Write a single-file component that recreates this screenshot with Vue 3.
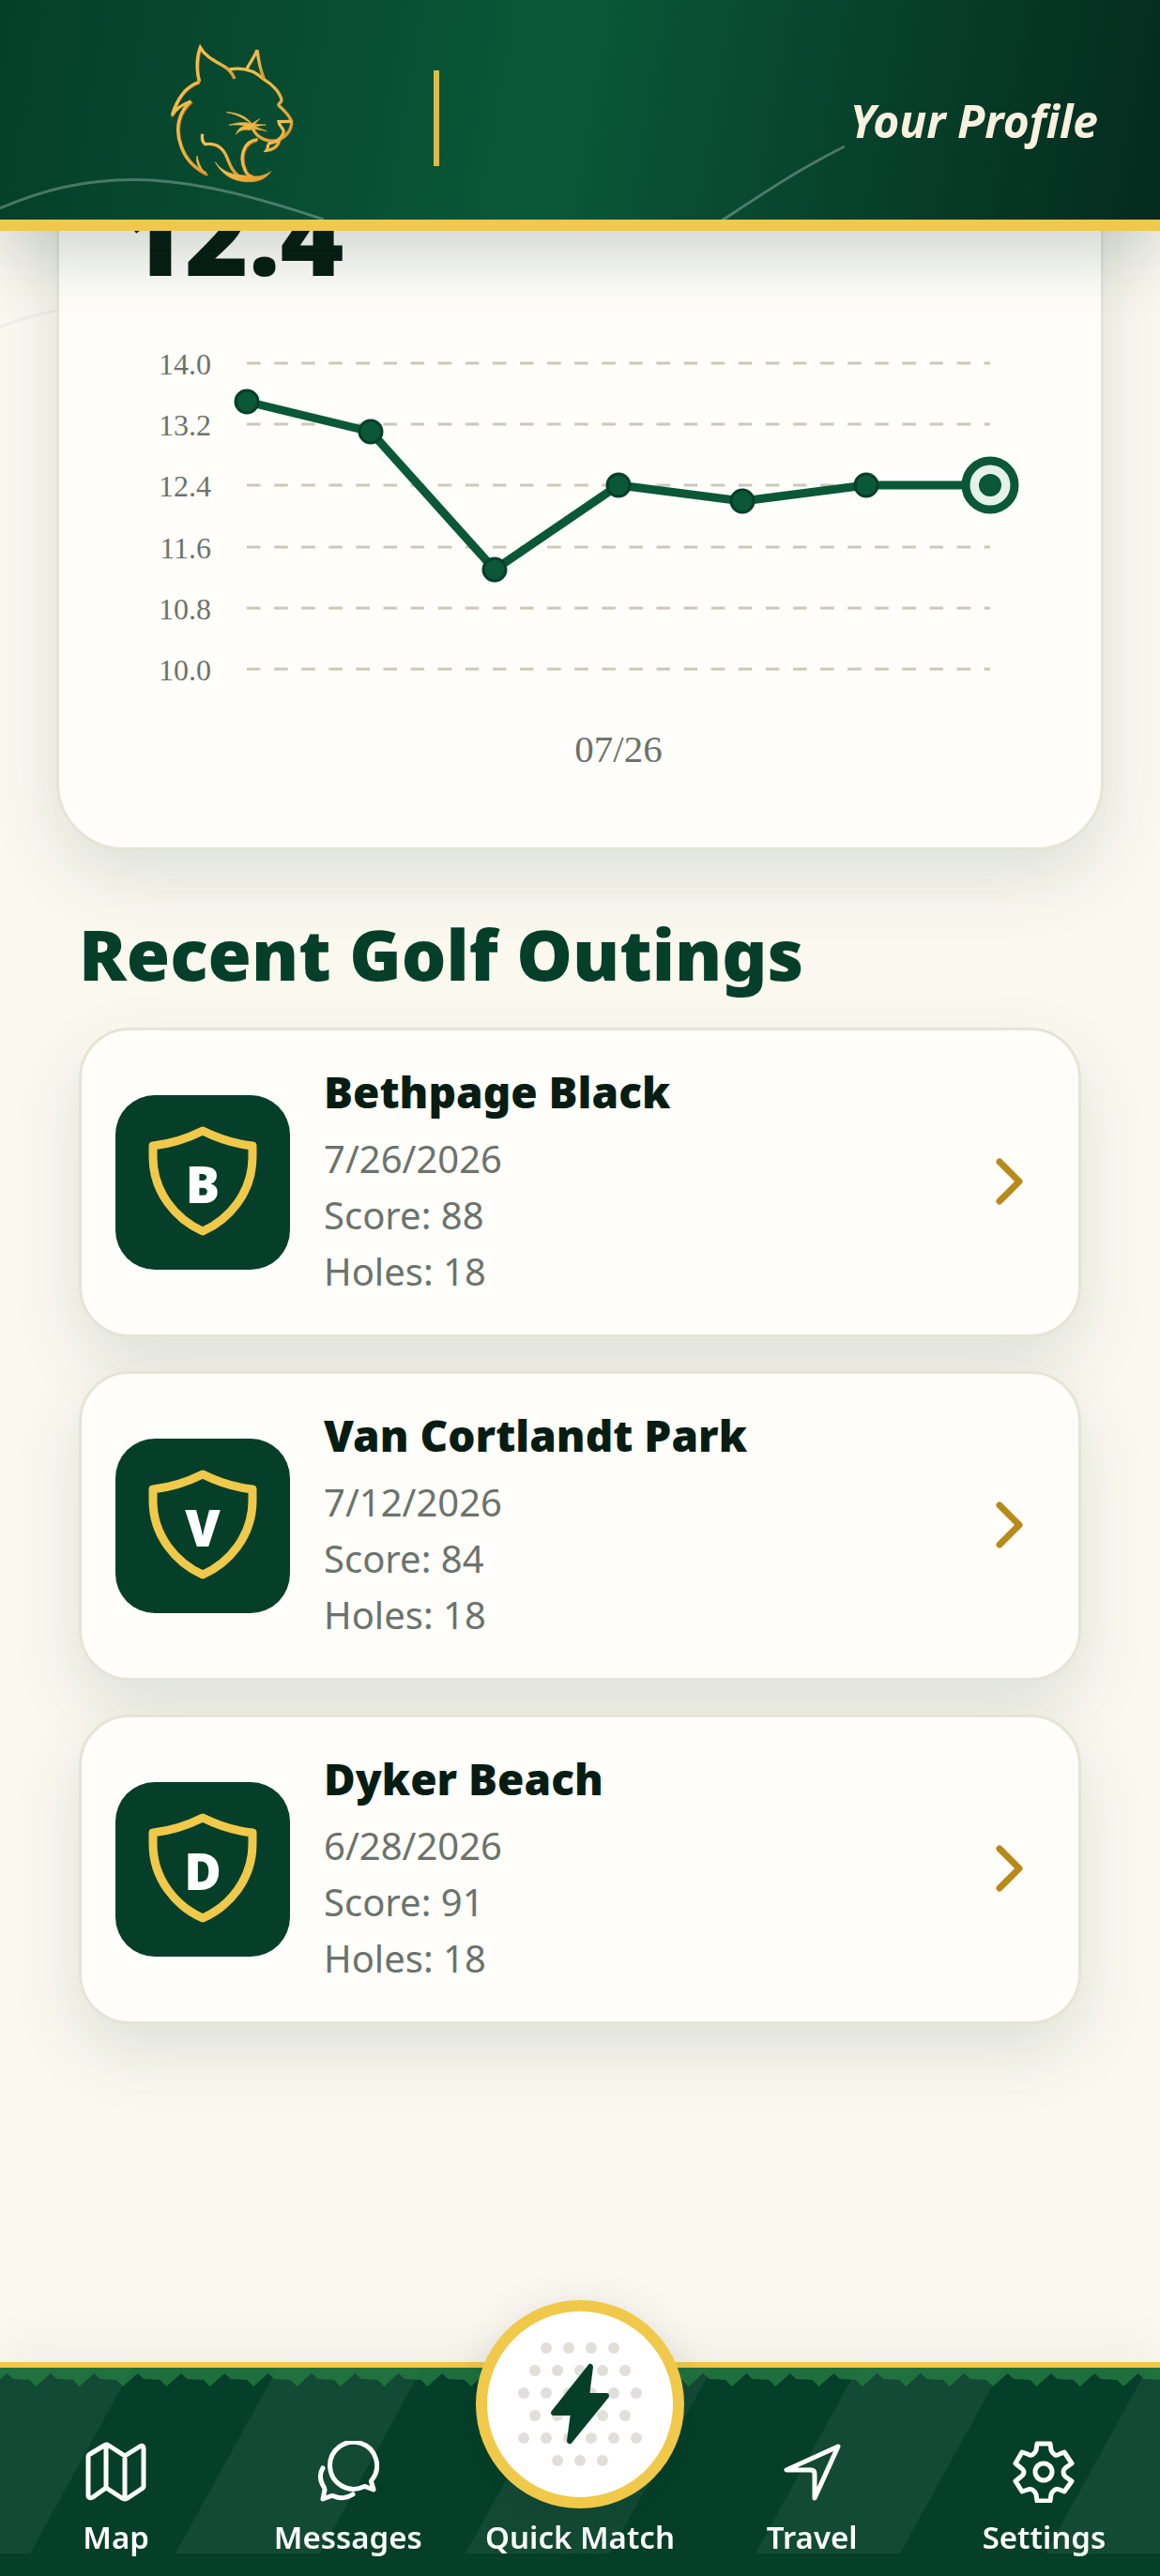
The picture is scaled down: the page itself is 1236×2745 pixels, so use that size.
<script setup>
import { computed } from 'vue'

const history = [13.5, 13.1, 11.3, 12.4, 12.2, 12.4, 12.4]
const ticks = [14.0, 13.2, 12.4, 11.6, 10.8, 10.0]

const yFor = (value) => Math.round(57 + (14 - value) * 81.5)
const points = history.map((value, i) => ({ x: 134 + i * 132, y: yFor(value) }))
const linePoints = computed(() => points.map((p) => `${p.x},${p.y}`).join(' '))
const lastPoint = points[points.length - 1]

const outings = [
  { course: 'Bethpage Black', date: '7/26/2026', score: 88, holes: 18 },
  { course: 'Van Cortlandt Park', date: '7/12/2026', score: 84, holes: 18 },
  { course: 'Dyker Beach', date: '6/28/2026', score: 91, holes: 18 },
]

const blade = 1236 / (26 + 2 / 3)
const grassPath = (() => {
  let d = 'M-10 0'
  for (let i = -1; i < 27; i++) {
    const x = 38.3 + i * blade
    d += `L${x} 20L${x + 15.7} 6L${x + 22} 12L${x + 39.5} 13`
  }
  return d + 'V0Z'
})()
const stripes = [0, 1, 2, 3, 4].map((i) => {
  const x = -122 + i * 309
  return `${x},198 ${x + 154},198 ${x + 263},0 ${x + 109},0`
})

const dots = [
  { y: -60, xs: [-36, -12, 12, 36] },
  { y: -36, xs: [-48, -24, 0, 24, 48] },
  { y: -12, xs: [-60, -36, -12, 12, 36, 60] },
  { y: 12, xs: [-48, -24, 0, 24, 48] },
  { y: 36, xs: [-60, -36, -12, 12, 36, 60] },
  { y: 60, xs: [-24, 0, 24] },
]
</script>

<template>
  <div class="page">
    <header class="top">
      <svg class="wave" viewBox="0 0 1236 234" preserveAspectRatio="none" aria-hidden="true">
        <path d="M0 222C110 173 205 187 345 234M769 235C815 205 850 181 900 156" />
      </svg>
      <svg class="logo" viewBox="0 18 510 540" role="img" aria-label="Wildcat logo">
        <defs>
          <linearGradient id="gold" x1="0" y1="0" x2="1" y2="1">
            <stop offset="0" stop-color="#f3bf50" />
            <stop offset="0.5" stop-color="#f0b644" />
            <stop offset="1" stop-color="#dc962f" />
          </linearGradient>
        </defs>
        <g class="logo-shade">
          <path d="M162 60C152 88 148 140 157 174M70 284C82 240 108 190 157 174M134 236C94 268 80 320 100 377C114 422 146 450 182 470M340 360C297 368 288 416 306 457" />
        </g>
        <g class="logo-lines">
          <path d="M158 170C146 135 149 90 160 62C180 98 225 112 250 132C260 142 266 150 270 162" />
          <path d="M254 132C298 123 336 138 364 164C394 182 416 208 420 230C420 240 406 240 412 248C428 262 446 280 452 298C453 324 436 346 412 357C378 367 344 354 328 322" />
          <path d="M309 130C321 106 336 88 342 70C346 102 354 138 364 162" />
          <path d="M157 172C106 188 82 240 70 278C84 256 100 244 130 234C92 266 78 320 98 375C112 418 143 448 178 464" />
          <path d="M452 298L411 299C412 314 424 316 427 330C424 343 420 350 408 357" />
          <path d="M413 357C410 378 392 390 372 391C378 384 374 376 380 369L411 360" />
          <path d="M167 338C165 352 166 364 176 371C214 366 234 386 245 412C255 437 262 458 286 476" />
          <path d="M344 356C296 360 284 416 304 456C310 468 318 474 330 476" />
        </g>
        <g class="logo-fill">
          <path d="M208 428C242 474 288 468 320 473C350 476 368 470 386 458C366 486 340 493 305 491C260 488 228 465 208 428Z" />
          <path d="M150 408C146 428 150 448 186 471C166 456 156 438 150 408Z" />
          <path d="M244 269C286 270 318 286 336 322C320 300 288 276 244 269Z" />
          <path d="M252 310C280 300 306 300 324 306L350 290L334 307L370 309L334 314L373 329L330 322L316 326C300 322 286 326 274 340C280 322 292 314 306 312C288 308 270 308 252 310Z" />
        </g>
      </svg>
      <span class="divider"></span>
      <h1 class="title">Your Profile</h1>
    </header>

    <main class="content">
      <svg class="contour" viewBox="0 0 60 20" aria-hidden="true">
        <path d="M0 18C22 10 40 5 60 1" />
      </svg>

      <section class="handicap" aria-label="Handicap history">
        <p class="value">12.4</p>
        <svg class="chart" viewBox="0 0 978 495" role="img" aria-label="Handicap trend">
          <g v-for="tick in ticks" :key="tick">
            <line class="grid" x1="134" x2="926" :y1="yFor(tick)" :y2="yFor(tick)" />
            <text class="tick" x="96" :y="yFor(tick) + 12">{{ tick.toFixed(1) }}</text>
          </g>
          <polyline class="trend" :points="linePoints" />
          <circle v-for="p in points.slice(0, -1)" :key="p.x" class="dot" :cx="p.x" :cy="p.y" r="12" />
          <circle class="halo" :cx="lastPoint.x" :cy="lastPoint.y" r="26" />
          <circle class="core" :cx="lastPoint.x" :cy="lastPoint.y" r="12" />
          <text class="month" x="530" y="482">07/26</text>
        </svg>
      </section>

      <section>
        <h2 class="heading">Recent Golf Outings</h2>
        <ul class="outings">
          <li v-for="outing in outings" :key="outing.course">
            <a class="outing" href="#">
              <svg class="badge" viewBox="0 0 186 186" aria-hidden="true">
                <path d="M93 38Q119 51 146 54V66C146 103 122 132 93 145C64 132 40 103 40 66V54Q67 51 93 38Z" />
                <text x="93" y="115">{{ outing.course[0] }}</text>
              </svg>
              <span class="info">
                <strong class="course">{{ outing.course }}</strong>
                <span class="detail">{{ outing.date }}</span>
                <span class="detail">Score: {{ outing.score }}</span>
                <span class="detail">Holes: {{ outing.holes }}</span>
              </span>
              <svg class="chevron" viewBox="0 0 80 80" aria-hidden="true">
                <path d="M32 18L53 39L32 60" />
              </svg>
            </a>
          </li>
        </ul>
      </section>
    </main>

    <nav class="tabs" aria-label="Main">
      <svg class="turf" viewBox="0 0 1236 198" preserveAspectRatio="none" aria-hidden="true">
        <polygon v-for="s in stripes" :key="s" class="stripe" :points="s" />
        <path class="grass" :d="grassPath" />
      </svg>
      <a class="tab" href="#">
        <svg class="icon" viewBox="0 0 66 66" aria-hidden="true">
          <path d="M3 17Q3 15 5 14L20 5Q22 3 25 5L42 16L58 6Q62 4 62 8V48Q62 50 60 51L45 61Q42 63 39 61L22 50L8 60Q3 62 3 58ZM22 5V50M42 16V61" />
        </svg>
        <span>Map</span>
      </a>
      <a class="tab" href="#">
        <svg class="icon" viewBox="0 0 66 66" aria-hidden="true">
          <path d="M58 42Q57 43 58 45L60 52L52 49Q51 48 49 49A25 25 0 1 1 58 42ZM6 29C2 35 3 43 7 49Q8 51 8 52L6 62L14 59Q16 58 18 59C24 62 32 61 38 57" />
        </svg>
        <span>Messages</span>
      </a>
      <a class="tab" href="#">
        <span class="quick">
          <svg viewBox="-99 -99 198 198" aria-hidden="true">
            <g class="dimples">
              <template v-for="row in dots" :key="row.y">
                <circle v-for="x in row.xs" :key="x" :cx="x" :cy="row.y" r="6" />
              </template>
            </g>
            <path class="bolt" d="M11 -40L7 -9H28L-11 39L-7 9H-28Z" />
          </svg>
        </span>
        <span>Quick Match</span>
      </a>
      <a class="tab" href="#">
        <svg class="icon" viewBox="0 0 66 66" aria-hidden="true">
          <path d="M61 6L6 31H32Q36 31 36 35V61Z" />
        </svg>
        <span>Travel</span>
      </a>
      <a class="tab" href="#">
        <svg class="icon" viewBox="0 0 66 66" aria-hidden="true">
          <path d="M26 3H40L41 10Q42 13 45 15Q47 16 50 14L55 12L63 24L56 29Q54 31 54 33Q54 36 56 38L63 43L55 54L50 52Q47 51 45 52Q42 54 41 57L40 64H26L25 57Q24 54 21 52Q18 51 16 52L10 54L3 43L9 38Q12 36 12 33Q12 31 9 29L3 24L10 12L16 14Q18 16 21 15Q24 13 25 10Z" />
          <circle cx="33" cy="33" r="9" />
        </svg>
        <span>Settings</span>
      </a>
    </nav>
  </div>
</template>

<style>
body {
  background: #fbf8f0;
}
</style>

<style scoped>
.page {
  min-height: 100vh;
  color: #071d13;
  font-family: "Noto Sans", "Open Sans", sans-serif;
}

.top {
  position: fixed;
  z-index: 2;
  top: 0;
  left: 0;
  right: 0;
  height: 246px;
  box-sizing: border-box;
  display: flex;
  align-items: center;
  gap: 132px;
  padding: 18px 66px 0 160px;
  border-bottom: 12px solid #f0c94a;
  background: linear-gradient(100deg, #053f29, #0a5838 48%, #042b1e) padding-box;
  box-shadow: 0 24px 72px rgba(5, 46, 31, 0.2);
}

.wave {
  position: absolute;
  inset: 0;
  width: 100%;
  height: 234px;
}

.wave path {
  fill: none;
  stroke: #fff;
  stroke-opacity: 0.28;
  stroke-width: 3;
}

.logo {
  width: 170px;
  height: 180px;
  flex: none;
  position: relative;
}

.logo-lines path {
  fill: none;
  stroke: url(#gold);
  stroke-width: 10;
  stroke-linejoin: miter;
}

.logo-shade path {
  fill: none;
  stroke: #a8641c;
  stroke-width: 11;
}

.logo-fill {
  fill: url(#gold);
  stroke: url(#gold);
  stroke-width: 2;
}

.divider {
  width: 6px;
  height: 102px;
  background: #dabc48;
}

.title {
  margin: 6px 0 0 auto;
  color: #f9f1df;
  font-size: 48px;
  line-height: 60px;
  font-style: italic;
  font-weight: 700;
}

.content {
  position: relative;
  padding: 108px 60px 588px;
}

.contour {
  position: absolute;
  top: 330px;
  left: 0;
  width: 60px;
  height: 20px;
}

.contour path {
  fill: none;
  stroke: #053f29;
  stroke-opacity: 0.04;
  stroke-width: 3;
}

.handicap {
  position: relative;
  padding: 78px 66px;
  border: 3px solid #e4e4d8;
  border-radius: 72px;
  background: #fffefa;
  box-shadow: 0 30px 72px rgba(5, 63, 41, 0.12);
}

.value {
  margin: 0 0 21px;
  font-size: 116px;
  line-height: 120px;
  font-weight: 900;
}

.chart {
  display: block;
  width: 100%;
}

.grid {
  stroke: #cbc8bb;
  stroke-width: 3;
  stroke-dasharray: 14.55;
}

.tick,
.month {
  fill: #6b736d;
  font-family: "Liberation Serif", serif;
}

.tick {
  font-size: 32px;
  text-anchor: end;
}

.month {
  font-size: 41px;
  text-anchor: middle;
}

.trend {
  fill: none;
  stroke: #0a5838;
  stroke-width: 9;
  stroke-linejoin: round;
}

.dot {
  fill: #0a5838;
  stroke: #053f29;
  stroke-width: 3;
}

.halo {
  fill: #e4f2ea;
  stroke: #0a5838;
  stroke-width: 9;
}

.core {
  fill: #0a5838;
}

.heading {
  margin: 62px 24px 31px;
  color: #053f29;
  font-size: 75px;
  line-height: 96px;
  font-weight: 900;
}

.outings {
  display: flex;
  flex-direction: column;
  gap: 36px;
  margin: 0 24px;
  padding: 0;
  list-style: none;
}

.outing {
  display: flex;
  align-items: center;
  gap: 36px;
  min-height: 330px;
  box-sizing: border-box;
  padding: 36px;
  border: 3px solid #e4e4d8;
  border-radius: 54px;
  background: #fffefa;
  box-shadow: 0 30px 72px rgba(5, 63, 41, 0.12);
  color: inherit;
  text-decoration: none;
}

.badge {
  flex: none;
  width: 186px;
  height: 186px;
  border-radius: 42px;
  background: #053f29;
}

.badge path {
  fill: none;
  stroke: #f0c94a;
  stroke-width: 9;
  stroke-linejoin: round;
}

.badge text {
  fill: #fff;
  font-size: 54px;
  font-weight: 900;
  text-anchor: middle;
}

.info {
  flex: 1;
  display: flex;
  flex-direction: column;
}

.course {
  margin-bottom: 14px;
  font-size: 46px;
  line-height: 56px;
  font-weight: 900;
}

.detail {
  color: #6b736d;
  font-size: 40px;
  line-height: 60px;
}

.chevron {
  flex: none;
  width: 80px;
  height: 80px;
}

.chevron path {
  fill: none;
  stroke: #b78a1a;
  stroke-width: 7;
  stroke-linecap: round;
  stroke-linejoin: round;
}

.tabs {
  position: fixed;
  z-index: 2;
  left: 0;
  right: 0;
  bottom: 0;
  height: 228px;
  box-sizing: border-box;
  display: flex;
  border-top: 6px solid #f0c94a;
  background: #053f29;
  box-shadow: 0 -12px 54px rgba(5, 46, 31, 0.05);
}

.turf {
  position: absolute;
  top: 0;
  left: 0;
  width: 100%;
  height: 198px;
}

.grass {
  fill: #257a42;
  fill-opacity: 0.82;
}

.stripe {
  fill: #fff;
  fill-opacity: 0.06;
}

.tab {
  position: relative;
  flex: 1 1 0;
  display: flex;
  flex-direction: column;
  align-items: center;
  justify-content: flex-end;
  gap: 13px;
  padding-bottom: 17px;
  color: #fff;
  font-size: 33px;
  line-height: 48px;
  font-weight: 600;
  text-decoration: none;
  white-space: nowrap;
}

.icon {
  width: 66px;
  height: 66px;
  fill: none;
  stroke: #fff;
  stroke-width: 5;
  stroke-linecap: round;
  stroke-linejoin: round;
}

.quick {
  position: absolute;
  top: -72px;
  width: 198px;
  height: 198px;
  border: 12px solid #f0c94a;
  border-radius: 50%;
  background: #fff;
  box-shadow: 0 12px 48px rgba(5, 46, 31, 0.16);
}

.dimples {
  fill: #e0dfdc;
}

.bolt {
  fill: #053f29;
  stroke: #053f29;
  stroke-width: 6;
  stroke-linejoin: round;
}
</style>
